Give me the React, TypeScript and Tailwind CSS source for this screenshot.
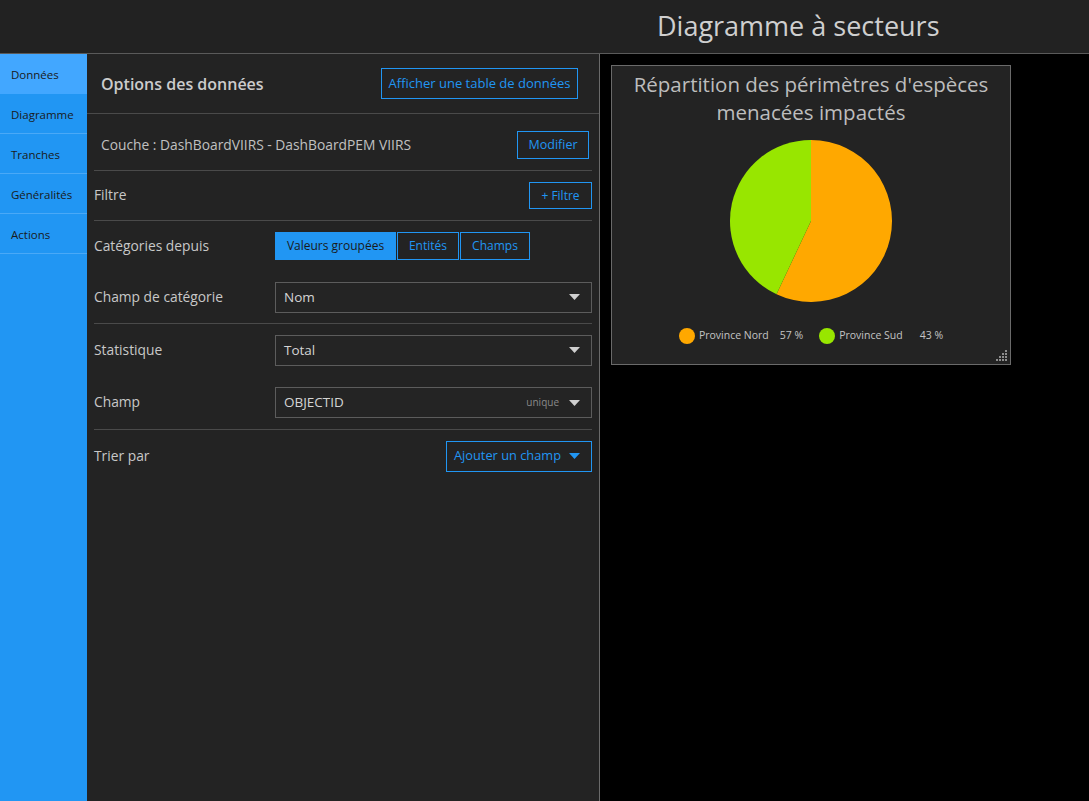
import React from 'react';

const font = { fontFamily: '"Open Sans", Lato, sans-serif' };

const navItems = ['Données', 'Diagramme', 'Tranches', 'Généralités', 'Actions'];

const Caret: React.FC<{ blue?: boolean }> = ({ blue }) => (
  <svg width="11" height="6" viewBox="0 0 11 6" className="shrink-0">
    <path d="M0 0 L11 0 L5.5 6 Z" fill={blue ? '#2196f3' : '#cfcfcf'} />
  </svg>
);

const Select: React.FC<{ value: string; hint?: string }> = ({ value, hint }) => (
  <div className="flex h-[31px] w-[317px] items-center border border-[#5c5c5c] bg-[#242424] pl-[8px] pr-[11px]">
    <span className="flex-1 text-[13.5px] text-[#d4d4d4]">{value}</span>
    {hint && <span className="mr-[10px] text-[10px] text-[#8a8a8a]">{hint}</span>}
    <Caret />
  </div>
);

const Row: React.FC<{ label: string; children: React.ReactNode; border?: boolean; className?: string }> = ({
  label,
  children,
  border,
  className = '',
}) => (
  <div className={`flex items-center ${border ? 'border-b border-[#4a4a4a]' : ''} ${className}`}>
    <span className="w-[181px] text-[13.8px] text-[#c8c8c8]">{label}</span>
    <div className="flex flex-1 justify-end">{children}</div>
  </div>
);

const Pie: React.FC = () => (
  <svg width="162" height="162" viewBox="0 0 162 162">
    <path d="M81 81 L81 0 A81 81 0 1 1 46.51 154.29 Z" fill="#ffa800" />
    <path d="M81 81 L46.51 154.29 A81 81 0 0 1 81 0 Z" fill="#98e600" />
  </svg>
);

const Grip: React.FC = () => {
  const dots: [number, number][] = [];
  for (let r = 0; r < 4; r++) {
    for (let c = 3 - r; c < 4; c++) dots.push([c * 3, r * 3]);
  }
  return (
    <svg width="11" height="11" viewBox="0 0 11 11" className="absolute bottom-[3px] right-[3px]">
      {dots.map(([x, y], i) => (
        <rect key={i} x={x} y={y} width="2" height="2" fill="#8c8c8c" />
      ))}
    </svg>
  );
};

export default function App() {
  return (
    <div style={font} className="flex h-[801px] w-[1089px] flex-col overflow-hidden bg-black">
      <header className="flex h-[54px] shrink-0 items-center border-b border-[#5a5a5a] bg-[#222222] pb-[3px] pl-[657px]">
        <h1 className="text-[27px] leading-none text-[#cfcfcf]">Diagramme à secteurs</h1>
      </header>

      <div className="flex flex-1">
        <nav className="w-[87px] shrink-0 bg-[#2196f3]">
          {navItems.map((item, i) => (
            <div
              key={item}
              className={`flex h-10 items-center pl-[11px] pt-[2px] text-[11.5px] text-[#1a1a1a] ${
                i === 0 ? 'bg-[#42a7ff]' : 'border-b border-[#4aa9f7]'
              }`}
            >
              {item}
            </div>
          ))}
        </nav>

        <section className="w-[513px] shrink-0 border-r border-[#6a6a6a] bg-[#232323]">
          <div className="flex h-[60px] items-center justify-between border-b border-[#4a4a4a] pl-[14px] pr-[21px]">
            <h2 className="text-[16px] font-semibold text-[#cccccc]">Options des données</h2>
            <button className="h-[31px] w-[197px] border border-[#2196f3] text-[13px] text-[#2196f3]">
              Afficher une table de données
            </button>
          </div>

          <div className="px-[7px]">
            <div className="flex h-[57px] items-center justify-between border-b border-[#4a4a4a] pl-[7px] pr-[3px] pt-[6px]">
              <span className="text-[13.8px] text-[#c0c0c0]">Couche : DashBoardVIIRS - DashBoardPEM VIIRS</span>
              <button className="h-[28px] w-[72px] border border-[#2196f3] text-[12.5px] text-[#2196f3]">Modifier</button>
            </div>

            <Row label="Filtre" border className="h-[50px]">
              <button className="h-[27px] w-[63px] border border-[#2196f3] text-[12px] text-[#2196f3]">+ Filtre</button>
            </Row>

            <Row label="Catégories depuis" className="h-[50px]">
              <div className="flex flex-1 gap-[1px]">
                <button className="h-[28px] w-[121px] bg-[#2196f3] text-[12px] text-[#1a1a1a]">Valeurs groupées</button>
                <button className="h-[28px] w-[62px] border border-[#2196f3] text-[12px] text-[#2196f3]">Entités</button>
                <button className="h-[28px] w-[70px] border border-[#2196f3] text-[12px] text-[#2196f3]">Champs</button>
              </div>
            </Row>

            <Row label="Champ de catégorie" border className="h-[53px]">
              <Select value="Nom" />
            </Row>

            <Row label="Statistique" className="h-[52px]">
              <Select value="Total" />
            </Row>

            <Row label="Champ" border className="h-[54px]">
              <Select value="OBJECTID" hint="unique" />
            </Row>

            <Row label="Trier par" className="h-[52px]">
              <div className="flex h-[31px] w-[146px] items-center justify-between border border-[#2196f3] pl-[7px] pr-[11px]">
                <span className="text-[12.8px] text-[#2196f3]">Ajouter un champ</span>
                <Caret blue />
              </div>
            </Row>
          </div>
        </section>

        <main className="flex-1 pl-[11px] pt-[11px]">
          <div className="relative flex h-[300px] w-[400px] flex-col items-center border border-[#6a6a6a] bg-[#232323]">
            <h3 className="pt-[4px] text-center text-[20.5px] leading-[28px] text-[#bdbdbd]">
              Répartition des périmètres d'espèces
              <br />
              menacées impactés
            </h3>
            <div className="mt-[14px]">
              <Pie />
            </div>
            <div className="mt-[26px] flex items-center text-[10.5px] text-[#c4c4c4]">
              <span className="h-[16px] w-[16px] rounded-full bg-[#ffa800]" />
              <span className="ml-[4px]">Province Nord</span>
              <span className="ml-[11px]">57 %</span>
              <span className="ml-[16px] h-[16px] w-[16px] rounded-full bg-[#98e600]" />
              <span className="ml-[4px]">Province Sud</span>
              <span className="ml-[17px]">43 %</span>
            </div>
            <Grip />
          </div>
        </main>
      </div>
    </div>
  );
}
